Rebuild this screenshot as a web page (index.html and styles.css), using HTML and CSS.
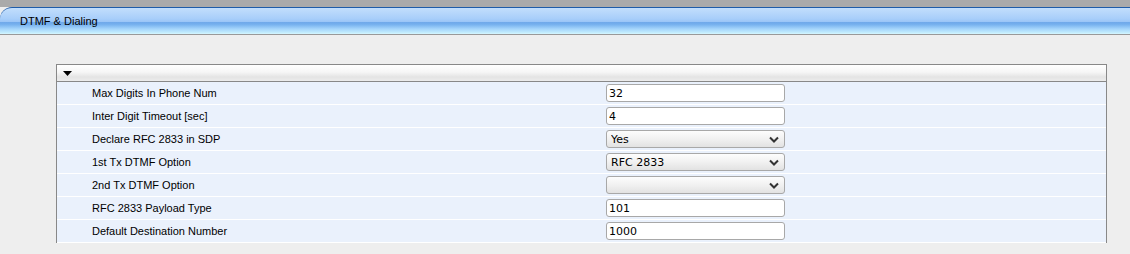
FILE: index.html
```html
<!DOCTYPE html>
<html lang="en">
<head>
    <meta charset="UTF-8">
    <title>DTMF &amp; Dialing</title>
    <link rel="stylesheet" href="styles.css">
</head>
<body>
    <div class="topbar"></div>
    <div class="tab-header">DTMF &amp; Dialing</div>

    <div class="content">
        <div class="panel">
            <div class="panel-head">
                <svg class="arrow" width="9" height="5" viewBox="0 0 9 5"><path d="M0 0 H9 L4.5 5 Z" fill="#000"/></svg>
            </div>
            <div class="row">
                <span class="label">Max Digits In Phone Num</span>
                <input type="text" class="field" value="32">
            </div>
            <div class="row">
                <span class="label">Inter Digit Timeout [sec]</span>
                <input type="text" class="field" value="4">
            </div>
            <div class="row">
                <span class="label">Declare RFC 2833 in SDP</span>
                <div class="select-wrap">
                    <select class="field sel"><option>Yes</option><option>No</option></select>
                    <svg class="chev" width="10" height="7" viewBox="0 0 10 7"><path d="M1 1.5 L5 5.5 L9 1.5" fill="none" stroke="#333" stroke-width="2"/></svg>
                </div>
            </div>
            <div class="row">
                <span class="label">1st Tx DTMF Option</span>
                <div class="select-wrap">
                    <select class="field sel"><option>RFC 2833</option></select>
                    <svg class="chev" width="10" height="7" viewBox="0 0 10 7"><path d="M1 1.5 L5 5.5 L9 1.5" fill="none" stroke="#333" stroke-width="2"/></svg>
                </div>
            </div>
            <div class="row">
                <span class="label">2nd Tx DTMF Option</span>
                <div class="select-wrap">
                    <select class="field sel"><option></option></select>
                    <svg class="chev" width="10" height="7" viewBox="0 0 10 7"><path d="M1 1.5 L5 5.5 L9 1.5" fill="none" stroke="#333" stroke-width="2"/></svg>
                </div>
            </div>
            <div class="row">
                <span class="label">RFC 2833 Payload Type</span>
                <input type="text" class="field" value="101">
            </div>
            <div class="row">
                <span class="label">Default Destination Number</span>
                <input type="text" class="field" value="1000">
            </div>
        </div>
    </div>
</body>
</html>
```

FILE: styles.css
```css
body {
    margin: 0;
    padding: 0;
    background-color: #eeeeee;
    font-family: "Liberation Sans", Arial, sans-serif;
    font-size: 11px;
    color: #000;
}
.topbar {
    height: 7px;
    background-color: #aaaaaa;
}
.tab-header {
    height: 26px;
    line-height: 27px;
    padding-left: 20px;
    border-top: 1px solid #1f5ca8;
    border-bottom: 1px solid #999999;
    border-top-left-radius: 12px;
    background: linear-gradient(#c2defc 0%, #a9cffa 40%, #9cc6f7 52%, #6ea8ea 56%, #78b2ef 64%, #a4d4fb 80%, #c6effe 96%, #d8f6ff 100%);
    font-size: 11px;
}
.content {
    padding: 29px 23px 0 56px;
}
.panel {
    border: 1px solid #888888;
    border-bottom: none;
    width: 1049px;
}
.panel-head {
    height: 16px;
    border-bottom: 1px solid #888888;
    background: linear-gradient(#ffffff 0%, #f6f6f6 45%, #e4e4e4 75%, #ececec 100%);
    display: flex;
    align-items: center;
    padding-left: 6px;
}
.row {
    height: 22px;
    border-bottom: 1px solid #ffffff;
    background-color: #eaf1fc;
    display: flex;
    align-items: center;
}
.label {
    width: 514px;
    padding-left: 35px;
}
.field {
    box-sizing: border-box;
    width: 179px;
    height: 18px;
    margin: 0;
    padding: 0 2px;
    border: 1px solid #a8a8a8;
    border-radius: 3px;
    background-color: #fff;
    font-family: "DejaVu Sans", sans-serif;
    font-size: 11px;
    color: #000;
}
.select-wrap {
    position: relative;
    display: flex;
}
.sel {
    appearance: none;
    -webkit-appearance: none;
    padding-left: 4px;
    background: linear-gradient(#fdfdfd 0%, #f1f1f1 50%, #e2e2e2 100%);
}
.chev {
    position: absolute;
    right: 6px;
    top: 6px;
    pointer-events: none;
}
```
